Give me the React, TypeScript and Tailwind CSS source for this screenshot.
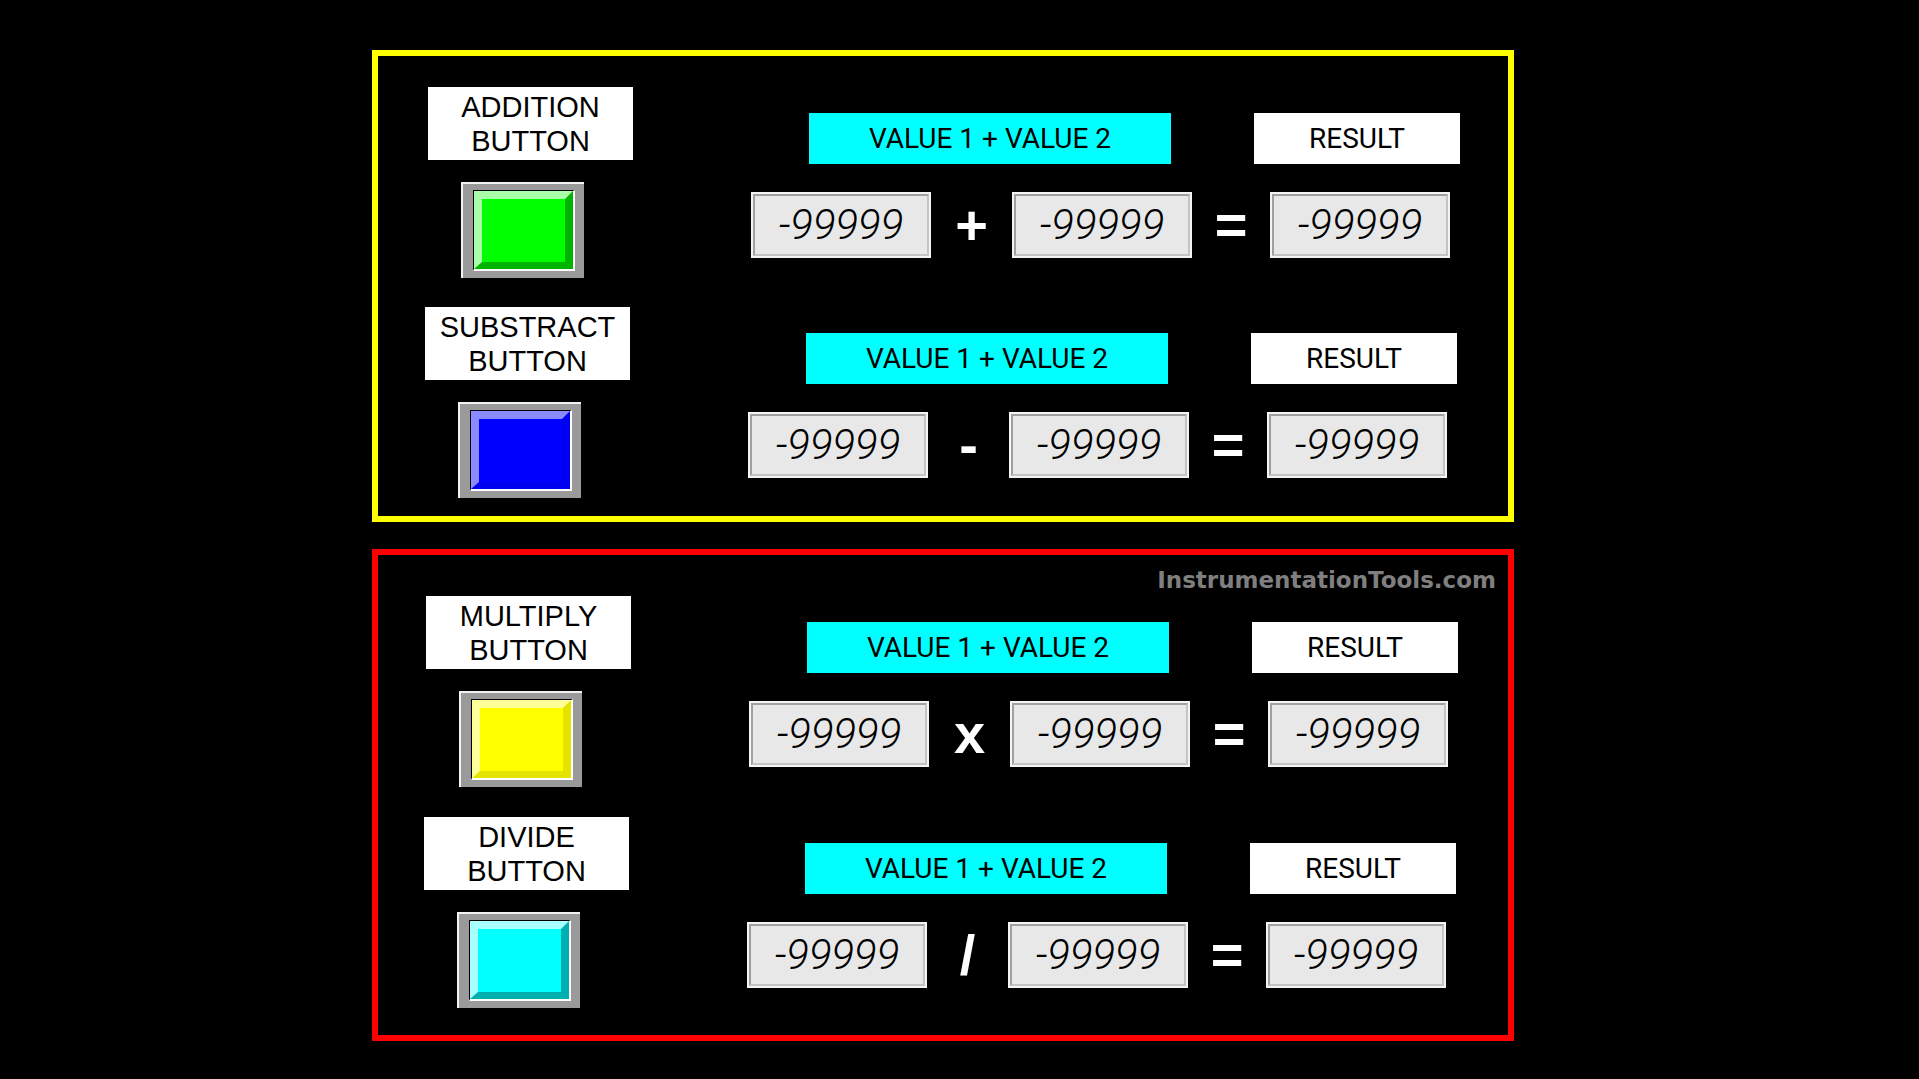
type Row = {
  lines: [string, string];
  op: string;
  face: string;
  shift: string;
};

const topRows: Row[] = [
  {
    lines: ['ADDITION', 'BUTTON'],
    op: '+',
    face: 'bg-[#00ff00] border-t-[#a8ffa8] border-l-[#a8ffa8] border-r-[#00b400] border-b-[#00b400]',
    shift: 'ml-[50px]',
  },
  {
    lines: ['SUBSTRACT', 'BUTTON'],
    op: '-',
    face: 'bg-[#0000ff] border-t-[#8a8aff] border-l-[#8a8aff] border-r-[#0000f0] border-b-[#0000f0]',
    shift: 'ml-[47px] mt-[29px]',
  },
];

const bottomRows: Row[] = [
  {
    lines: ['MULTIPLY', 'BUTTON'],
    op: 'x',
    face: 'bg-[#ffff00] border-t-[#ffff9a] border-l-[#ffff9a] border-r-[#e4e400] border-b-[#e4e400]',
    shift: 'ml-[48px]',
  },
  {
    lines: ['DIVIDE', 'BUTTON'],
    op: '/',
    face: 'bg-[#00ffff] border-t-[#a8ffff] border-l-[#a8ffff] border-r-[#00b0b0] border-b-[#00b0b0]',
    shift: 'ml-[46px] mt-[30px]',
  },
];

// raised push button inside a grey bezel
const PushButton = ({ face }: { face: string }) => (
  <div className="flex h-[96px] w-[123px] border-t-2 border-l-2 border-[#f2f2f2] bg-[#9a9a9a] pt-[6px] pl-[10px] pr-[9px] pb-[7px]">
    <div className="flex flex-1 border-t border-l border-t-black border-l-black border-r-2 border-b-2 border-r-white border-b-white">
      <div className={`flex-1 border-t-8 border-l-8 border-r-8 border-b-[7px] ${face}`} />
    </div>
  </div>
);

// numeric readout
const Readout = () => (
  <div className="h-[66px] w-[180px] border-2 border-[#f4f4f4] bg-[#f4f4f4]">
    <div className="flex h-full w-full items-center justify-center border-t-2 border-l-2 border-t-[#a0a0a0] border-l-[#a0a0a0] border-r-2 border-b-2 border-r-[#c4c4c4] border-b-[#c4c4c4] bg-[#e8e8e8]">
      <span className="font-['Roboto',sans-serif] text-[42px] font-light italic leading-none tracking-[0px] text-black">
        -99999
      </span>
    </div>
  </div>
);

const Op = ({ sign, w }: { sign: string; w: string }) => (
  <div className={`flex items-center justify-center ${w}`}>
    <span className="font-['Liberation_Sans',Arial,sans-serif] text-[56px] font-bold leading-none text-white">
      {sign}
    </span>
  </div>
);

const CalcRow = ({ row }: { row: Row }) => (
  <div className={`flex items-start ${row.shift}`}>
    <div className="flex w-[205px] flex-col">
      <div className="flex h-[73px] w-[205px] flex-col items-center justify-center bg-white font-['Liberation_Sans',Arial,sans-serif] text-[29px] leading-[34px] text-black">
        <span>{row.lines[0]}</span>
        <span>{row.lines[1]}</span>
      </div>
      <div className="mt-[22px] ml-[33px]">
        <PushButton face={row.face} />
      </div>
    </div>
    <div className="ml-[118px] mt-[26px] flex flex-col">
      <div className="flex pl-[58px] font-['Roboto',sans-serif] text-[28px] text-black">
        <div className="flex h-[51px] w-[362px] items-center justify-center bg-[#00ffff]">VALUE 1 + VALUE 2</div>
        <div className="ml-[83px] flex h-[51px] w-[206px] items-center justify-center bg-white">RESULT</div>
      </div>
      <div className="mt-[28px] flex items-center">
        <Readout />
        <Op sign={row.op} w="w-[81px]" />
        <Readout />
        <Op sign="=" w="w-[78px]" />
        <Readout />
      </div>
    </div>
  </div>
);

export default function App() {
  return (
    <div className="h-[1079px] w-full overflow-hidden bg-black pt-[50px]">
      <div className="ml-[372px] h-[472px] w-[1142px] border-[6px] border-[#ffff00] pt-[31px]">
        {topRows.map((r) => (
          <CalcRow key={r.lines[0]} row={r} />
        ))}
      </div>
      <div className="relative mt-[27px] ml-[372px] h-[492px] w-[1142px] border-[6px] border-[#ff0000] pt-[41px]">
        <span className="absolute top-[14px] right-[12px] font-['DejaVu_Sans',Verdana,sans-serif] text-[23px] font-bold leading-none text-[#7f7f7f]">
          InstrumentationTools.com
        </span>
        {bottomRows.map((r) => (
          <CalcRow key={r.lines[0]} row={r} />
        ))}
      </div>
    </div>
  );
}
